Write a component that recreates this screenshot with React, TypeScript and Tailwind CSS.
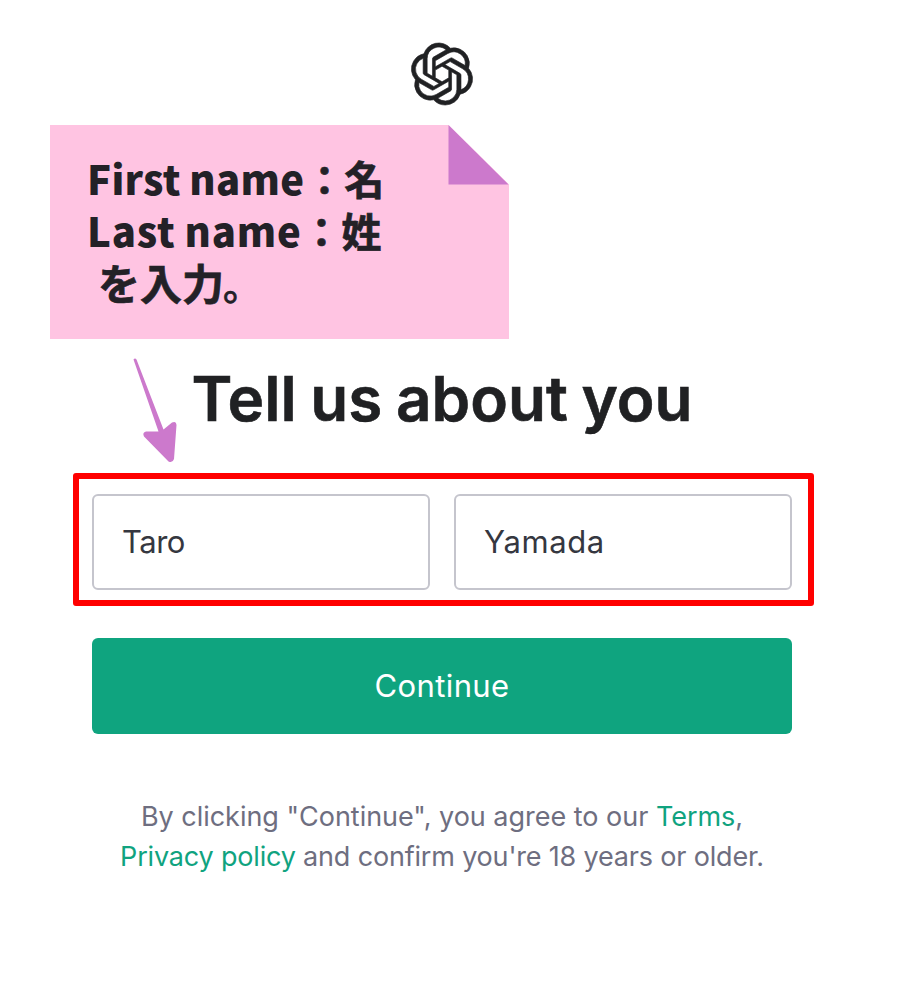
import { SiOpenai } from "react-icons/si";

function Callout() {
  return (
    <div className="absolute left-[50px] top-[125px] h-[214px] w-[459px]">
      <svg className="absolute inset-0" width="459" height="214" viewBox="0 0 459 214">
        <path d="M0 0H398.500L459 59.500V214H0Z" fill="#ffc4e2" />
        <path d="M398.500 0L458.500 59.500H398.500Z" fill="#cc79cc" />
      </svg>
      <div className="relative flex flex-col whitespace-pre pl-[37px] pt-[27px] font-['Noto_Sans_CJK_JP',sans-serif] text-[40px] font-bold leading-[52px] text-[#232127] [-webkit-text-stroke:0.7px_#232127]">
        <p><span className="font-black tracking-[0.3px] [word-spacing:-1px] [-webkit-text-stroke:0px]">First name</span>：名</p>
        <p><span className="font-black tracking-[0.8px] [word-spacing:-1px] [-webkit-text-stroke:0px]">Last name</span>：姓</p>
        <p className="pl-[11px] text-[42px]">を入力<span className="-ml-[1px] text-[38px] font-medium">。</span></p>
      </div>
    </div>
  );
}

function Arrow() {
  return (
    <svg className="absolute left-[130px] top-[355px]" width="50" height="110" viewBox="130 355 50 110">
      <path
        d="M133.500 359.500Q135 357.500 136.500 359.500L163.500 429.500L172 422.500Q176 420.500 176.500 425L174 459Q172.500 463.500 168.500 461.500L144 436.500Q142 432.500 146 431.500L158.500 431.500Z"
        fill="#cc79cc"
      />
    </svg>
  );
}

function Field({ value, spacing }: { value: string; spacing: string }) {
  return (
    <input
      readOnly
      value={value}
      className={`h-24 w-[338px] rounded-md border-2 border-[#c5c5cd] bg-white px-7 pb-px text-[31px] text-[#353740] outline-none ${spacing}`}
    />
  );
}

export default function App() {
  return (
    <div className="relative h-[982px] w-[922px] overflow-hidden bg-white font-['Inter',sans-serif]">
      <main className="ml-[92px] flex w-[700px] flex-col items-center pt-[43px]">
        <SiOpenai className="size-[62px] overflow-visible stroke-[#202123] text-[#202123] [stroke-width:0.25px]" />
        <h1 className="mt-[254px] h-[81px] whitespace-nowrap text-[62px] font-semibold leading-[80px] text-[#202123] [-webkit-text-stroke:0.6px_#202123] [word-spacing:-2px]">
          Tell us about you
        </h1>
        <div className="mt-[54px] flex gap-6">
          <Field value="Taro" spacing="tracking-[-0.5px]" />
          <Field value="Yamada" spacing="tracking-[0.6px]" />
        </div>
        <button className="mt-12 h-24 w-full rounded-md bg-[#0fa47f] text-[31px] tracking-[0.4px] text-white">Continue</button>
        <div className="mt-[63px] flex flex-col items-center whitespace-nowrap text-[27px] leading-10 text-[#6e6e80]">
          <p className="tracking-[-0.02px]">By clicking "Continue", you agree to our <span className="text-[#10a37f]">Terms</span>,</p>
          <p className="tracking-[-0.18px]"><span className="text-[#10a37f]">Privacy policy</span> and confirm you're 18 years or older.</p>
        </div>
      </main>
      <div className="absolute left-[73px] top-[473px] h-[133px] w-[741px] rounded-[3px] border-[6px] border-[#ff0000]" />
      <Callout />
      <Arrow />
    </div>
  );
}
